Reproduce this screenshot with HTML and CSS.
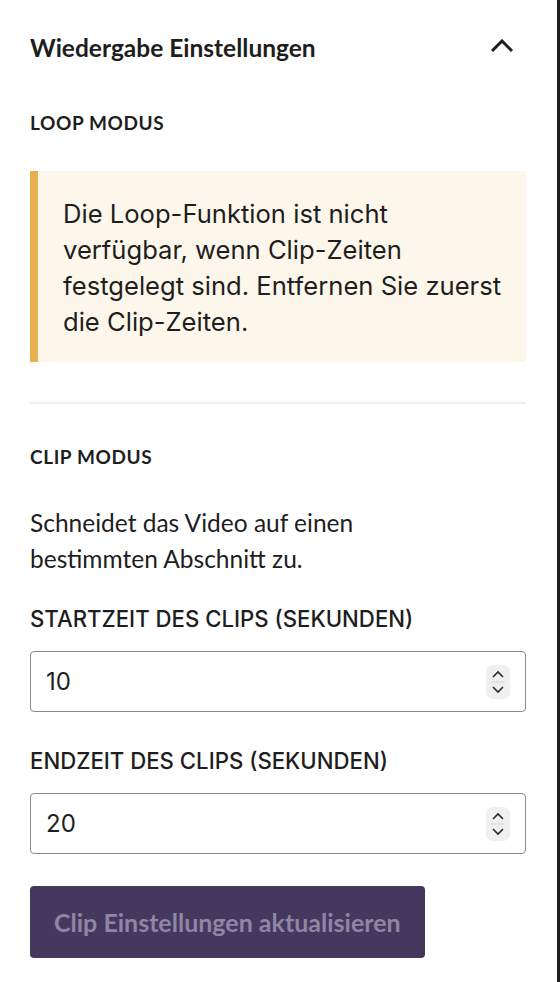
FILE: index.html
```html
<!DOCTYPE html>
<html lang="de">
<head>
  <meta charset="UTF-8">
  <meta name="viewport" content="width=device-width, initial-scale=1.0">
  <title>Wiedergabe Einstellungen</title>
  <link rel="stylesheet" href="styles.css">
</head>
<body>
  <div class="sidebar">
    <div class="panel-header">
      <h2>Wiedergabe Einstellungen</h2>
      <svg class="toggle" width="24" height="14" viewBox="0 0 24 14">
        <polyline points="2,12 12,2 22,12" fill="none" stroke="#1e1e1e" stroke-width="3"/>
      </svg>
    </div>

    <div class="section-label">Loop Modus</div>
    <div class="notice">
      Die Loop-Funktion ist nicht verfügbar, wenn Clip-Zeiten festgelegt sind. Entfernen Sie zuerst die Clip-Zeiten.
    </div>

    <hr class="divider">

    <div class="section-label clip">Clip Modus</div>
    <p class="help">Schneidet das Video auf einen bestimmten Abschnitt zu.</p>

    <label class="field-label" for="clip-start">Startzeit des Clips (Sekunden)</label>
    <div class="number-field">
      <input id="clip-start" type="text" value="10">
      <span class="spin">
        <svg width="24" height="34" viewBox="0 0 24 34">
          <polyline points="7,12 12,7 17,12" fill="none" stroke="#2b2b2b" stroke-width="1.6"/>
          <line x1="5" y1="17" x2="19" y2="17" stroke="#d4d4d4" stroke-width="1"/>
          <polyline points="7,22 12,27 17,22" fill="none" stroke="#2b2b2b" stroke-width="1.6"/>
        </svg>
      </span>
    </div>

    <label class="field-label end" for="clip-end">Endzeit des Clips (Sekunden)</label>
    <div class="number-field">
      <input id="clip-end" type="text" value="20">
      <span class="spin">
        <svg width="24" height="34" viewBox="0 0 24 34">
          <polyline points="7,12 12,7 17,12" fill="none" stroke="#2b2b2b" stroke-width="1.6"/>
          <line x1="5" y1="17" x2="19" y2="17" stroke="#d4d4d4" stroke-width="1"/>
          <polyline points="7,22 12,27 17,22" fill="none" stroke="#2b2b2b" stroke-width="1.6"/>
        </svg>
      </span>
    </div>

    <button class="update-btn" disabled>Clip Einstellungen aktualisieren</button>
  </div>
</body>
</html>
```

FILE: styles.css
```css
body {
  margin: 0;
  background: #fff;
  color: #1e1e1e;
  font-family: Lato, "Noto Sans", sans-serif;
}
.sidebar {
  box-sizing: border-box;
  min-height: 100vh;
  width: 560px;
  padding: 32px 31px 24px 30px;
  border-right: 3px solid #1e1e22;
  display: flex;
  flex-direction: column;
}
.panel-header {
  display: flex;
  align-items: center;
  justify-content: space-between;
  height: 32px;
}
.panel-header h2 {
  margin: 0;
  font-size: 24.5px;
  font-weight: 700;
  line-height: 32px;
}
.toggle {
  margin-right: 12px;
  margin-top: -4px;
}
.section-label {
  margin-top: 47px;
  font-size: 19px;
  font-weight: 700;
  line-height: 24px;
  letter-spacing: 0.6px;
  text-transform: uppercase;
}
.section-label.clip {
  margin-top: 41px;
}
.notice {
  margin-top: 36px;
  padding: 25px 14px 22px 25px;
  background: #fdf6eb;
  border-left: 8px solid #e6b04f;
  font-family: Inter, "Liberation Sans", sans-serif;
  font-size: 25.6px;
  line-height: 36px;
}
.divider {
  margin: 40px 0 0;
  border: 0;
  height: 2px;
  background: #efefef;
}
.help {
  margin: 36px 0 0;
  max-width: 400px;
  font-size: 24.5px;
  line-height: 36px;
}
.field-label {
  display: block;
  margin-top: 30px;
  font-family: Inter, "Liberation Sans", sans-serif;
  font-size: 22.2px;
  font-weight: 500;
  line-height: 24px;
  text-transform: uppercase;
}
.field-label.end {
  margin-top: 37px;
}
.number-field {
  display: flex;
  align-items: center;
  height: 61px;
  margin-top: 20px;
  box-sizing: border-box;
  border: 1.5px solid #8a8a8a;
  border-radius: 4px;
  padding: 0 15px 0 15px;
}
.number-field input {
  flex: 1;
  min-width: 0;
  border: 0;
  outline: 0;
  padding: 0;
  background: transparent;
  font-family: Inter, "Liberation Sans", sans-serif;
  font-size: 24px;
  color: #1e1e1e;
}
.spin {
  display: flex;
  background: #f0f0f0;
  border-radius: 7px;
}
.update-btn {
  align-self: flex-start;
  margin-top: 32px;
  height: 72px;
  padding: 0 24px;
  border: 0;
  border-radius: 4px;
  background: #45385f;
  color: #8e86a2;
  font-family: Lato, "Noto Sans", sans-serif;
  font-size: 25px;
  font-weight: 700;
}
```
